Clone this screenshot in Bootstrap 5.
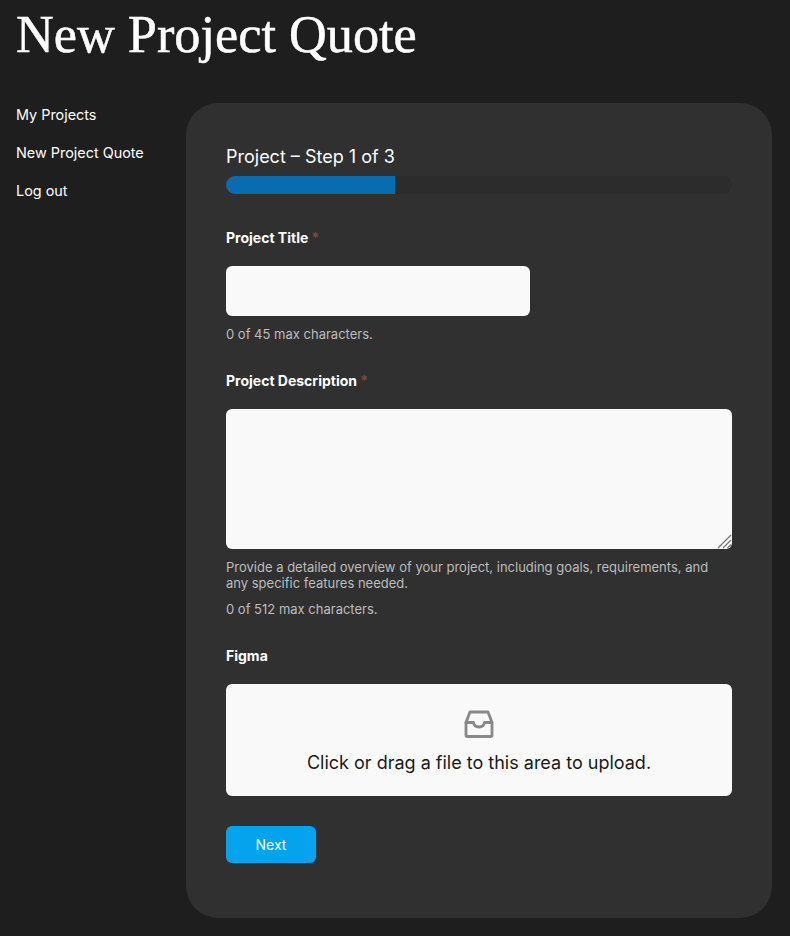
<!DOCTYPE html>
<html lang="en">
<head>
    <meta charset="UTF-8">
    <meta name="viewport" content="width=device-width, initial-scale=1.0">
    <title>New Project Quote</title>
    <link href="https://cdn.jsdelivr.net/npm/bootstrap@5.3.0/dist/css/bootstrap.min.css" rel="stylesheet">
    <style>
        body {
            background: #1e1e1e;
            color: #fff;
            font-family: Inter, "Liberation Sans", sans-serif;
            font-size: 14px;
            height: 936px;
            overflow: hidden;
        }
        .page-title {
            font-family: "Liberation Serif", serif;
            font-size: 52.3px;
            line-height: 68px;
            font-weight: 400;
            margin: 0 0 35px;
            padding-left: 16px;
            color: #fff;
            -webkit-text-stroke: 0.5px #fff;
        }
        .side-nav {
            width: 186px;
            padding: 2px 0 0 16px;
            gap: 18px;
        }
        .side-nav a {
            color: #fff;
            text-decoration: none;
            font-size: 14.4px;
            line-height: 20px;
        }
        .quote-panel {
            width: 586px;
            height: 815px;
            background: #303030;
            border-radius: 32px;
            padding: 43px 40px 0;
        }
        .step-title {
            font-size: 18px;
            line-height: 22px;
            font-weight: 400;
            margin: 0 0 8px;
        }
        .step-bar {
            height: 18px;
            background: #2c2c2c;
            border-radius: 9px;
            margin-bottom: 34px;
        }
        .step-bar .progress-bar {
            background: #0a6cb0;
        }
        .field-label {
            display: block;
            font-weight: 700;
            font-size: 14px;
            line-height: 20px;
            margin-bottom: 18px;
        }
        .req {
            color: #7a4a3c;
        }
        .field-input {
            background: #f9f9f9;
            border: 0;
            border-radius: 6px;
        }
        .title-input {
            width: 304px;
            height: 50px;
        }
        .desc-input {
            height: 140px;
            display: block;
            resize: none;
        }
        .resize-grip {
            position: absolute;
            right: 0;
            bottom: 0;
            pointer-events: none;
        }
        .field-note {
            color: #bdbdbd;
            font-size: 13px;
            line-height: 16px;
            margin: 10px 0 0;
        }
        .field-note + .field-note {
            margin-top: 10px;
        }
        .field-group {
            margin-bottom: 29px;
        }
        .upload-box {
            height: 112px;
            background: #f9f9f9;
            border-radius: 6px;
            color: #1a1a1a;
            font-size: 18px;
            padding-top: 24px;
        }
        .upload-box svg {
            margin-bottom: 9px;
        }
        .next-btn {
            width: 90px;
            height: 37px;
            margin-top: 30px;
            background: #05a2ee;
            border: 0;
            border-radius: 6px;
            color: #fff;
            font-size: 14px;
            font-weight: 400;
            padding: 0;
        }
    </style>
</head>
<body>
    <h1 class="page-title">New Project Quote</h1>
    <div class="d-flex">
        <nav class="side-nav d-flex flex-column flex-shrink-0">
            <a href="#">My Projects</a>
            <a href="#">New Project Quote</a>
            <a href="#">Log out</a>
        </nav>
        <main class="quote-panel">
            <h2 class="step-title">Project – Step 1 of 3</h2>
            <div class="progress step-bar">
                <div class="progress-bar" style="width: 33.33%"></div>
            </div>
            <form>
                <div class="field-group">
                    <label class="field-label" for="projectTitle">Project Title <span class="req">*</span></label>
                    <input type="text" class="form-control field-input title-input" id="projectTitle">
                    <p class="field-note">0 of 45 max characters.</p>
                </div>
                <div class="field-group">
                    <label class="field-label" for="projectDesc">Project Description <span class="req">*</span></label>
                    <div class="position-relative">
                        <textarea class="form-control field-input desc-input" id="projectDesc"></textarea>
                        <svg class="resize-grip" width="16" height="16" viewBox="0 0 16 16" stroke="#777" stroke-width="1.300" fill="none">
                            <path d="M2 15 15 2M7 15l8-8M11.500 15l3.500-3.500"/>
                        </svg>
                    </div>
                    <p class="field-note">Provide a detailed overview of your project, including goals, requirements, and any specific features needed.</p>
                    <p class="field-note">0 of 512 max characters.</p>
                </div>
                <div>
                    <span class="field-label">Figma</span>
                    <div class="upload-box d-flex flex-column align-items-center">
                        <svg width="32" height="32" viewBox="0 0 32 32" fill="none" stroke="#888" stroke-width="2.800" stroke-linejoin="round" stroke-linecap="round">
                            <path d="M3 14.500 7 4h18l4 10.500V27a1.500 1.500 0 0 1-1.500 1.500h-23A1.500 1.500 0 0 1 3 27z"/>
                            <path d="M3 14.500h7.500c.5 3 2.500 4.500 5.500 4.500s5-1.500 5.500-4.500H29"/>
                        </svg>
                        <span>Click or drag a file to this area to upload.</span>
                    </div>
                </div>
                <button type="button" class="btn next-btn">Next</button>
            </form>
        </main>
    </div>
    <script src="https://cdn.jsdelivr.net/npm/bootstrap@5.3.0/dist/js/bootstrap.bundle.min.js"></script>
</body>
</html>
